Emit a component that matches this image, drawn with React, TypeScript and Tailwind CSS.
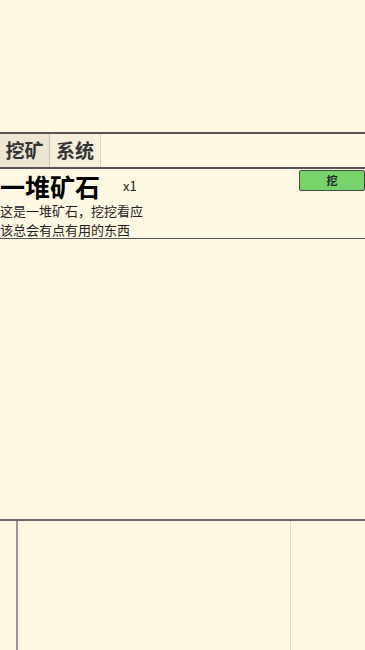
const font = "font-['Noto_Sans_CJK_SC',sans-serif]";

export default function App() {
  return (
    <div className={`h-[650px] w-[365px] bg-[#fef8e2] flex flex-col ${font} text-[#222]`}>
      <div className="h-[132px]" />
      <div className="flex h-[37px] border-y-2 border-[#555]">
        <div className="w-[50px] flex items-center justify-center bg-[#ece6d3] border-r border-[#c9c2ad] text-[19px] font-bold text-[#333]">
          挖矿
        </div>
        <div className="w-[51px] flex items-center justify-center bg-[#f5efdb] border-r border-[#d8d1bc] text-[19px] font-bold text-[#333]">
          系统
        </div>
      </div>
      <div className="relative border-b border-[#555] h-[70px]">
        <div className="flex items-center h-[33px]">
          <span className="text-[25px] font-bold leading-[36px] text-black">一堆矿石</span>
          <span className="ml-[23px] text-[13px] leading-[16px] text-[#222]">x1</span>
        </div>
        <div className="text-[13px] leading-[19px] mt-[-1px] text-[#222]">
          <div>这是一堆矿石，挖挖看应</div>
          <div>该总会有点有用的东西</div>
        </div>
        <button className="absolute right-0 top-[1px] w-[66px] h-[21px] bg-[#77d36a] border border-[#444] rounded-[2px] text-[11px] font-bold text-[#222] flex items-center justify-center">
          挖
        </button>
      </div>
      <div className="flex-1" />
      <div className="h-[131px] border-t-2 border-[#666] flex">
        <div className="w-[18px] border-r-2 border-[#999]" />
        <div className="w-[273px] border-r border-[#ddd6c2]" />
        <div className="flex-1" />
      </div>
    </div>
  );
}
